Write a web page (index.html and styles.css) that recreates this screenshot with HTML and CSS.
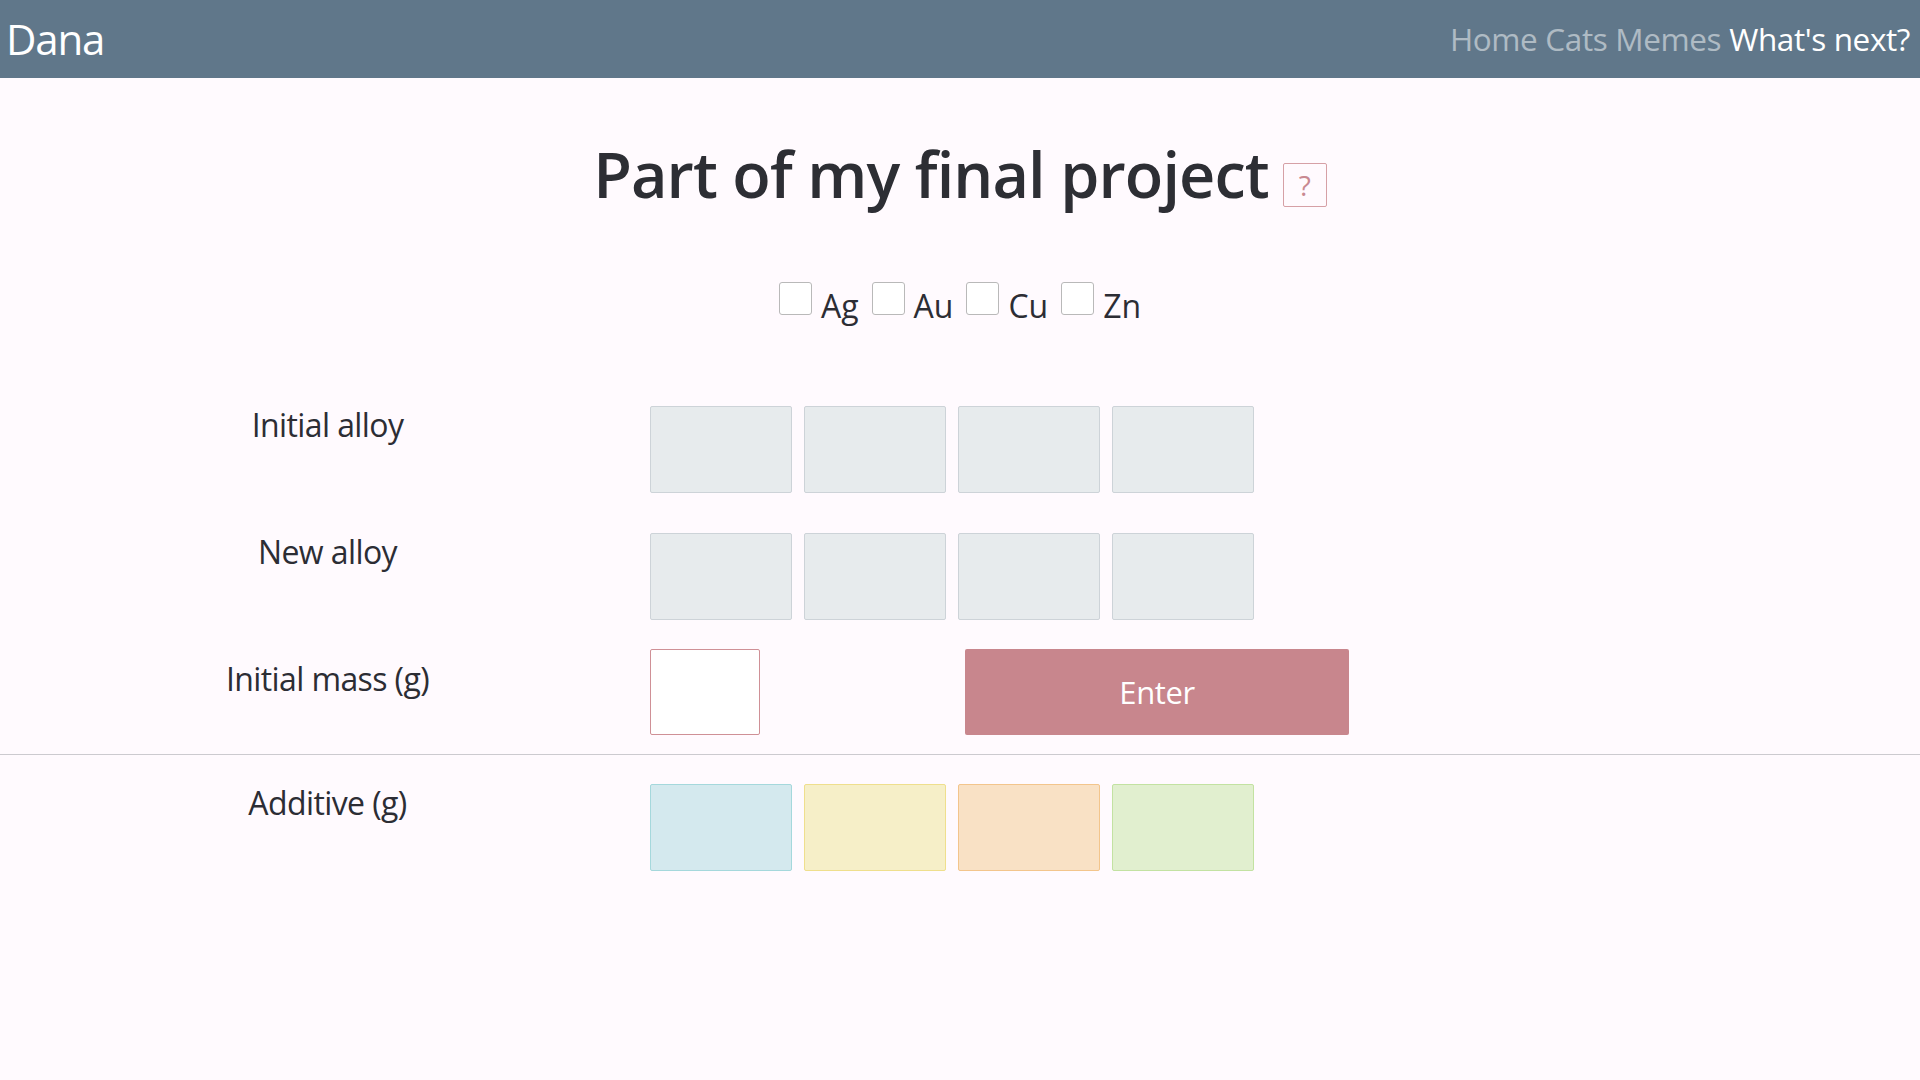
FILE: index.html
```html
<!DOCTYPE html>
<html lang="en">
<head>
<meta charset="utf-8">
<title>Dana</title>
<link rel="stylesheet" href="styles.css">
</head>
<body>
<header class="navbar">
  <a class="brand" href="#">Dana</a>
  <nav class="nav-links">
    <a class="nav-link" href="#">Home</a>
    <a class="nav-link" href="#">Cats</a>
    <a class="nav-link" href="#">Memes</a>
    <a class="nav-link active" href="#">What's next?</a>
  </nav>
</header>
<main class="page">
  <div class="title-row">
    <h1 class="title">Part of my final project</h1>
    <button class="help" type="button">?</button>
  </div>
  <div class="metals"><label class="metal"><input type="checkbox" class="metal-box"><span>Ag</span></label><label class="metal"><input type="checkbox" class="metal-box"><span>Au</span></label><label class="metal"><input type="checkbox" class="metal-box"><span>Cu</span></label><label class="metal"><input type="checkbox" class="metal-box"><span>Zn</span></label></div>

  <div class="form-row row-initial">
    <div class="row-label">Initial alloy</div>
    <div class="fields">
      <input class="cell" disabled>
      <input class="cell" disabled>
      <input class="cell" disabled>
      <input class="cell" disabled>
    </div>
  </div>
  <div class="form-row row-new">
    <div class="row-label">New alloy</div>
    <div class="fields">
      <input class="cell" disabled>
      <input class="cell" disabled>
      <input class="cell" disabled>
      <input class="cell" disabled>
    </div>
  </div>
  <div class="form-row row-mass">
    <div class="row-label label-mass">Initial mass (g)</div>
    <div class="fields fields-mass">
      <input class="mass-input">
      <button class="enter" type="button">Enter</button>
    </div>
  </div>
  <hr class="divider">
  <div class="form-row row-additive">
    <div class="row-label">Additive (g)</div>
    <div class="fields">
      <input class="cell add-ag">
      <input class="cell add-au">
      <input class="cell add-cu">
      <input class="cell add-zn">
    </div>
  </div>
</main>
</body>
</html>
```

FILE: styles.css
```css
html, body {
  margin: 0;
  padding: 0;
}
body {
  background: #fffafe;
  color: #2c2d34;
  font-family: "Open Sans", "Noto Sans", "DejaVu Sans", sans-serif;
  min-height: 1080px;
}

.navbar {
  height: 78px;
  background: #60778a;
  display: flex;
  justify-content: space-between;
  align-items: flex-start;
  padding: 0 10px 0 6px;
}
.brand {
  color: #ffffff;
  text-decoration: none;
  font-size: 42px;
  line-height: 78px;
  letter-spacing: -1.2px;
}
.nav-links {
  display: flex;
  gap: 8px;
  font-size: 31.5px;
  line-height: 78px;
  letter-spacing: -0.4px;
}
.nav-link {
  color: rgba(255, 255, 255, 0.5);
  text-decoration: none;
}
.nav-link.active {
  color: #ffffff;
}

.page {
  display: flex;
  flex-direction: column;
}

.title-row {
  display: flex;
  justify-content: center;
  align-items: flex-end;
  margin-top: 58px;
  gap: 14px;
}
.title {
  margin: 0;
  font-size: 63px;
  line-height: 76px;
  font-weight: 600;
  letter-spacing: -0.9px;
  color: #2d2e34;
}
.help {
  width: 44px;
  height: 44px;
  margin-bottom: 5px;
  padding: 0;
  border: 1px solid #d6a0a6;
  border-radius: 2px;
  background: #fffafe;
  color: #c98991;
  font-family: inherit;
  font-size: 28px;
  font-weight: 400;
  line-height: 40px;
}

.metals {
  margin-top: 70px;
  text-align: center;
  font-size: 32px;
  line-height: 48px;
}
.metal {
  margin-right: 13px;
}
.metal:last-child {
  margin-right: 0;
}
.metal-box {
  -webkit-appearance: none;
  appearance: none;
  display: inline-block;
  vertical-align: baseline;
  width: 33px;
  height: 33px;
  margin: 0 9px 3px 0;
  border: 1px solid #b9b9b9;
  border-radius: 3px;
  background: #ffffff;
  box-sizing: border-box;
}

.form-row {
  display: flex;
  align-items: flex-start;
}
.row-initial { margin-top: 76px; }
.row-new { margin-top: 40px; }
.row-mass { margin-top: 29px; }
.row-additive { margin-top: 29px; }

.row-label {
  width: 650px;
  box-sizing: border-box;
  padding-left: 5px;
  text-align: center;
  font-size: 32px;
  line-height: 38px;
  letter-spacing: -0.6px;
  margin-top: 0;
}
.label-mass {
  margin-top: 11px;
}

.fields {
  display: flex;
  gap: 12px;
}
.cell {
  width: 142px;
  height: 87px;
  box-sizing: border-box;
  margin: 0;
  padding: 0;
  border: 1px solid #cdd3d8;
  border-radius: 2px;
  background: #e7ebed;
}
.fields-mass {
  gap: 205px;
}
.mass-input {
  width: 110px;
  height: 86px;
  box-sizing: border-box;
  margin: 0;
  border: 1px solid #cf9096;
  border-radius: 2px;
  background: #ffffff;
}
.enter {
  width: 384px;
  height: 86px;
  margin: 0;
  border: none;
  border-radius: 2px;
  background: #c8868d;
  color: #ffffff;
  font-family: inherit;
  font-size: 31px;
  letter-spacing: -0.4px;
}

.divider {
  margin: 19px 0 0;
  border: none;
  border-top: 1px solid #cccacf;
  height: 0;
}

.add-ag { background: #d4e9ee; border-color: #a5d8dc; }
.add-au { background: #f6efc8; border-color: #efdf8d; }
.add-cu { background: #f9e1c5; border-color: #f3c58c; }
.add-zn { background: #e1efcf; border-color: #c3e2a2; }
```
